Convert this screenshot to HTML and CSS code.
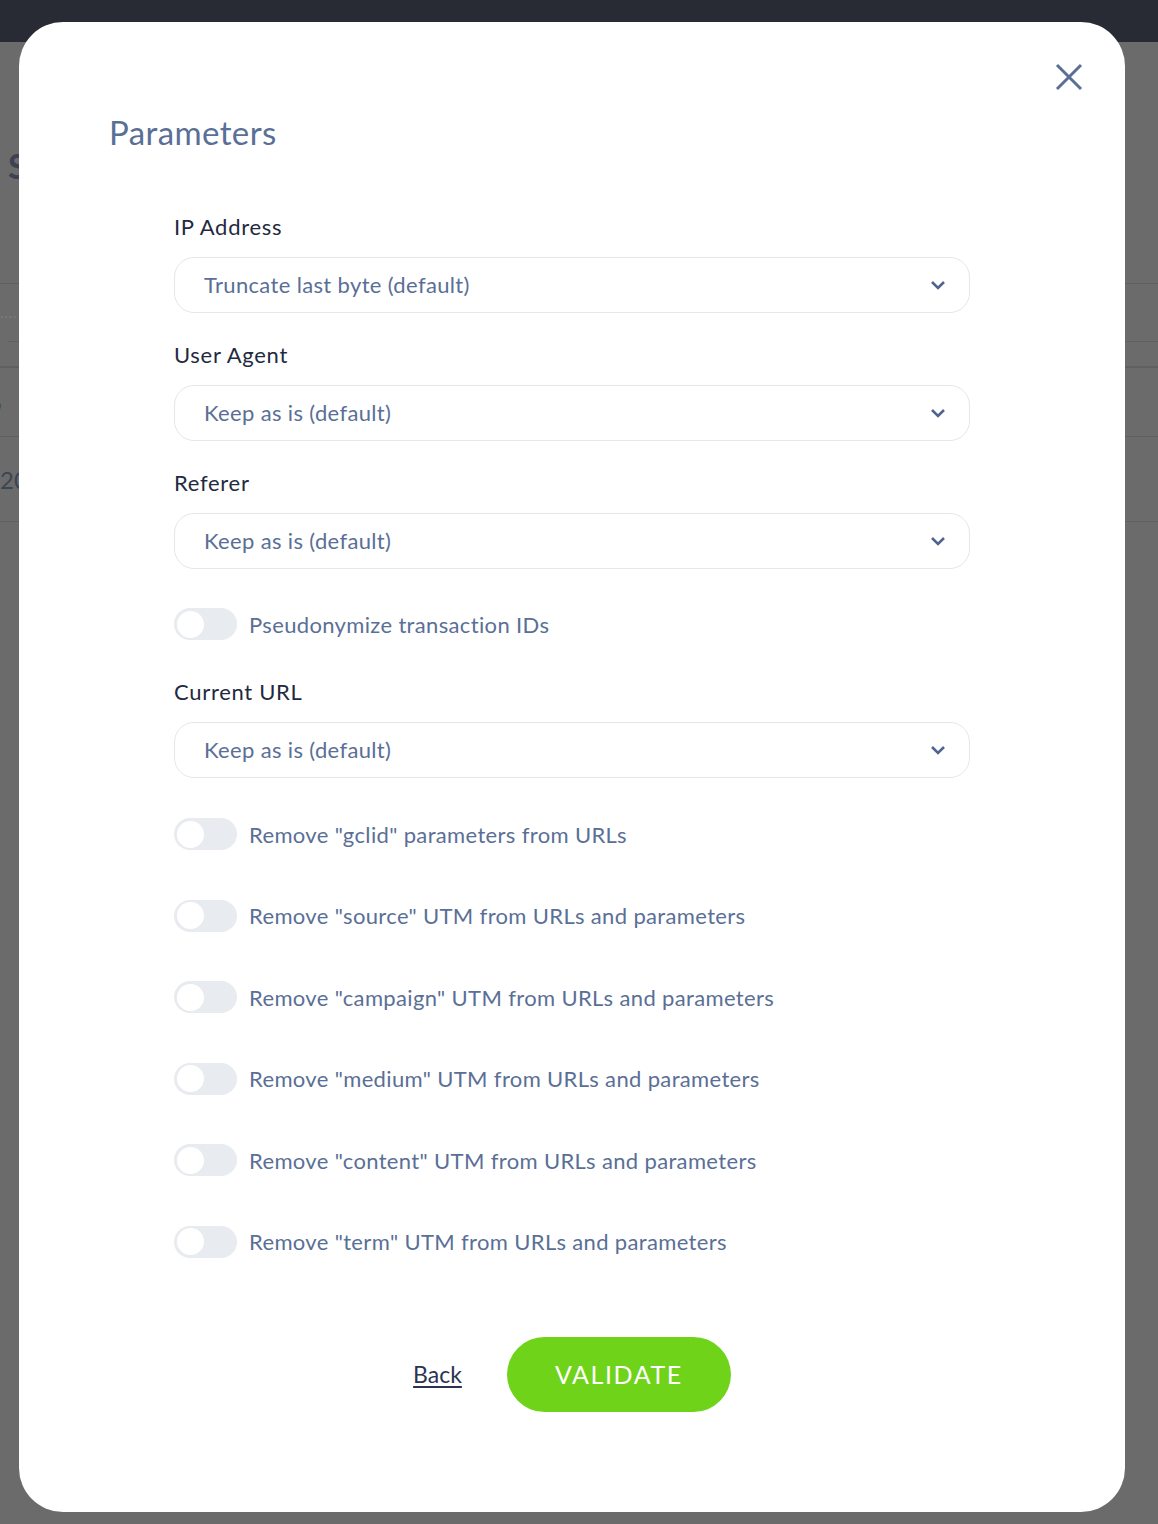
FILE: index.html
```html
<!DOCTYPE html>
<html lang="en">
<head>
<meta charset="utf-8">
<title>Parameters</title>
<link rel="stylesheet" href="styles.css">
</head>
<body>
<div class="page">
  <div class="topbar"></div>
  <div class="bg-content">
    <div class="bg-title">S</div>
    <div class="bg-row bg-row-search"><span class="bg-muted">....</span></div>
    <div class="bg-row bg-row-short"></div>
    <div class="bg-row bg-row-head"><span>o</span></div>
    <div class="bg-row bg-row-data"><span>20</span></div>
  </div>
</div>
<div class="overlay">
  <div class="modal">
    <button class="close" aria-label="Close">
      <svg width="28" height="28" viewBox="0 0 28 28"><path d="M2 2 L26 26 M26 2 L2 26" stroke="#5a6f96" stroke-width="3" fill="none"/></svg>
    </button>
    <h1 class="title">Parameters</h1>
    <form class="form">
      <div class="field">
        <label class="label">IP Address</label>
        <div class="select"><span>Truncate last byte (default)</span>
          <svg class="chev" width="16" height="10" viewBox="0 0 16 10"><path d="M2 2 L8 8 L14 2" stroke="#4f6590" stroke-width="2.6" fill="none"/></svg></div>
      </div>
      <div class="field">
        <label class="label">User Agent</label>
        <div class="select"><span>Keep as is (default)</span>
          <svg class="chev" width="16" height="10" viewBox="0 0 16 10"><path d="M2 2 L8 8 L14 2" stroke="#4f6590" stroke-width="2.6" fill="none"/></svg></div>
      </div>
      <div class="field">
        <label class="label">Referer</label>
        <div class="select"><span>Keep as is (default)</span>
          <svg class="chev" width="16" height="10" viewBox="0 0 16 10"><path d="M2 2 L8 8 L14 2" stroke="#4f6590" stroke-width="2.6" fill="none"/></svg></div>
      </div>
      <div class="toggle-row first"><span class="toggle"><span class="knob"></span></span><span class="toggle-text">Pseudonymize transaction IDs</span></div>
      <div class="field after-toggle">
        <label class="label">Current URL</label>
        <div class="select"><span>Keep as is (default)</span>
          <svg class="chev" width="16" height="10" viewBox="0 0 16 10"><path d="M2 2 L8 8 L14 2" stroke="#4f6590" stroke-width="2.6" fill="none"/></svg></div>
      </div>
      <div class="toggles">
        <div class="toggle-row"><span class="toggle"><span class="knob"></span></span><span class="toggle-text">Remove "gclid" parameters from URLs</span></div>
        <div class="toggle-row"><span class="toggle"><span class="knob"></span></span><span class="toggle-text">Remove "source" UTM from URLs and parameters</span></div>
        <div class="toggle-row"><span class="toggle"><span class="knob"></span></span><span class="toggle-text">Remove "campaign" UTM from URLs and parameters</span></div>
        <div class="toggle-row"><span class="toggle"><span class="knob"></span></span><span class="toggle-text">Remove "medium" UTM from URLs and parameters</span></div>
        <div class="toggle-row"><span class="toggle"><span class="knob"></span></span><span class="toggle-text">Remove "content" UTM from URLs and parameters</span></div>
        <div class="toggle-row"><span class="toggle"><span class="knob"></span></span><span class="toggle-text">Remove "term" UTM from URLs and parameters</span></div>
      </div>
      <div class="actions">
        <a class="back" href="#">Back</a>
        <button type="button" class="validate">VALIDATE</button>
      </div>
    </form>
  </div>
</div>
</body>
</html>
```

FILE: styles.css
```css
* { box-sizing: border-box; }
html, body { margin: 0; padding: 0; }
body {
  width: 1158px;
  height: 1524px;
  overflow: hidden;
  background: #6b6b6b;
  font-family: Lato, "Open Sans", sans-serif;
  position: relative;
}
.page { width: 100%; height: 100%; }
.topbar { height: 42px; background: #282b34; }
.bg-content { padding-left: 8px; }
.bg-title {
  margin-top: 104px;
  font-size: 34px;
  font-weight: 700;
  color: #3d4252;
  line-height: 40px;
  height: 137px;
}
.bg-row { border-top: 1px solid #606060; display: flex; align-items: center; color: #3d4454; font-size: 24px; }
.bg-row-search { height: 58px; font-size: 14px; padding-left: 0; margin-left: -8px; }
.bg-muted { color: #7d7d7d; letter-spacing: 1px; }
.bg-row-short { height: 25px; }
.bg-row-head { height: 70px; border-top: 2px solid #606060; margin-left: -20px; }
.bg-row-data { height: 86px; border-bottom: 1px solid #606060; margin-left: -8px; }

.overlay {
  position: absolute;
  left: 0; top: 0;
  width: 100%; height: 100%;
  padding: 22px 33px 12px 19px;
}
.modal {
  position: relative;
  width: 1106px;
  height: 1490px;
  background: #fff;
  border-radius: 44px;
  padding: 90px 155px 0 155px;
}
.close {
  position: absolute;
  right: 42px;
  top: 41px;
  width: 28px;
  height: 28px;
  padding: 0;
  border: 0;
  background: none;
  cursor: pointer;
  display: flex;
}
.title {
  margin: 0 0 0 -65px;
  font-weight: 400;
  font-size: 33px;
  line-height: 40px;
  color: #5a6f96;
  letter-spacing: 0.4px;
}
.form {
  margin-top: 61px;
  display: flex;
  flex-direction: column;
}
.field { display: flex; flex-direction: column; margin-bottom: 28px; }
.label {
  font-size: 22px;
  line-height: 28px;
  color: #1f2a40;
  margin-bottom: 16px;
  letter-spacing: 0.7px;
}
.select {
  height: 56px;
  border: 1px solid #e4e7eb;
  border-radius: 20px;
  display: flex;
  align-items: center;
  justify-content: space-between;
  padding: 0 23px 2px 29px;
  font-size: 22px;
  letter-spacing: 0.35px;
  color: #5a6f96;
}
.chev { display: block; margin-top: 2px; }
.toggle-row {
  display: flex;
  align-items: center;
  height: 32px;
  gap: 12px;
}
.toggle-row.first { margin-top: 11px; margin-bottom: 38px; }
.toggle {
  width: 63px;
  height: 32px;
  border-radius: 16px;
  background: #e8ebef;
  padding: 3px;
  display: flex;
  align-items: center;
}
.knob {
  width: 27px;
  height: 27px;
  border-radius: 50%;
  background: #fff;
}
.toggle-text { font-size: 22px; letter-spacing: 0.35px; color: #5a6f96; }
.after-toggle { margin-bottom: 40px; }
.toggles { display: flex; flex-direction: column; gap: 49.6px; }
.actions {
  margin-top: 79px;
  display: flex;
  justify-content: center;
  align-items: center;
  gap: 45px;
}
.back {
  font-size: 23px;
  color: #2a3450;
  text-decoration: underline;
  text-underline-offset: 3px;
}
.validate {
  width: 224px;
  height: 75px;
  border: 0;
  border-radius: 38px;
  background: #6fd31a;
  color: #fff;
  font-family: Lato, "Open Sans", sans-serif;
  font-size: 25px;
  letter-spacing: 1.6px;
  cursor: pointer;
}
```
